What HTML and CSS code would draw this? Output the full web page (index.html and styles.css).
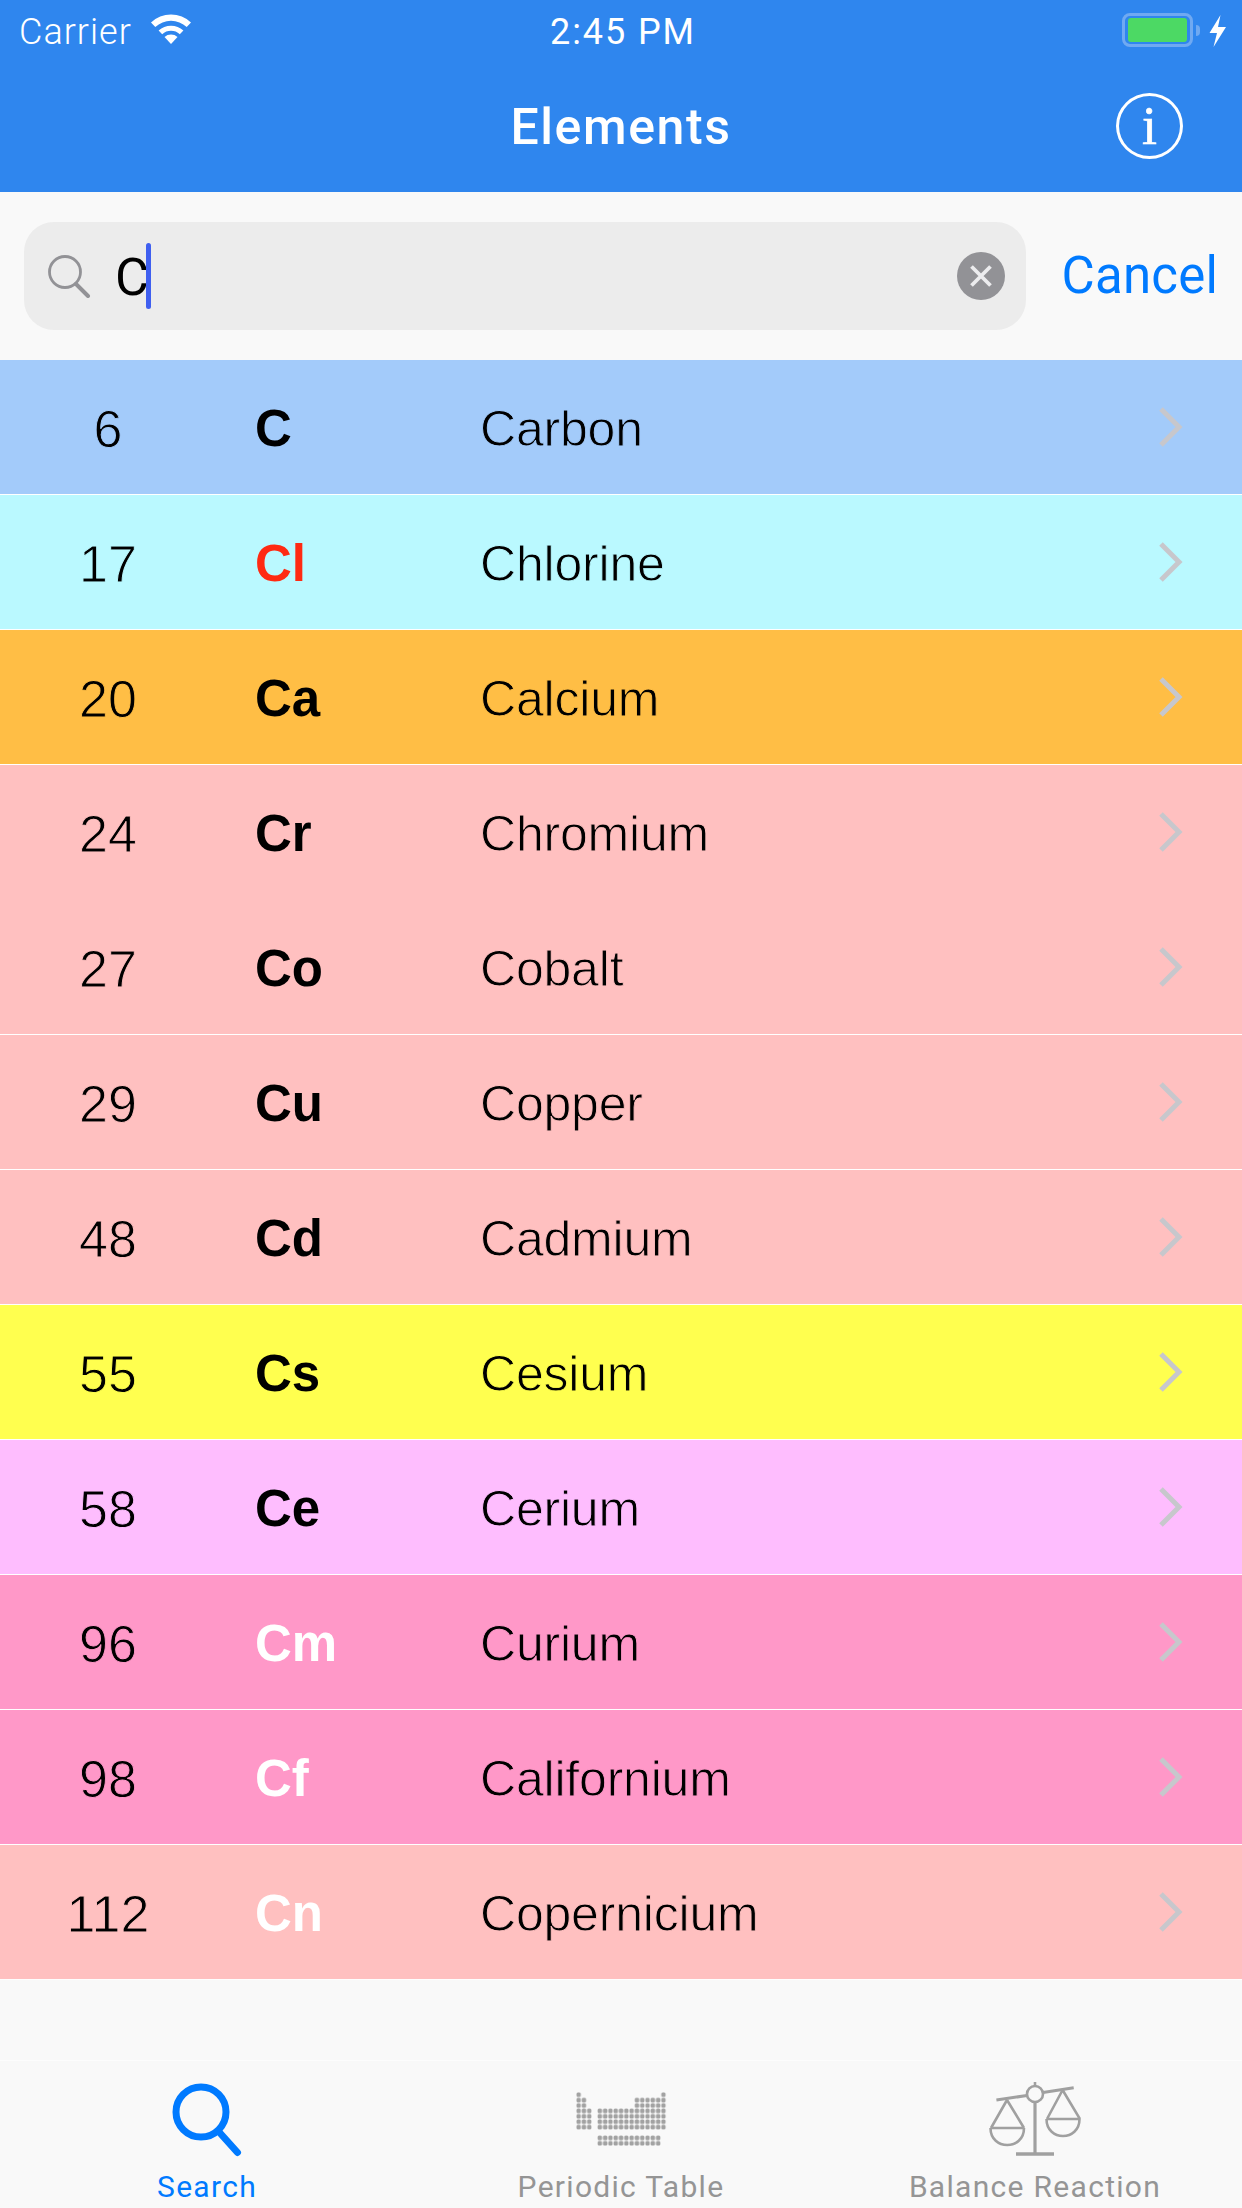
FILE: index.html
```html
<!DOCTYPE html>
<html lang="en">
<head>
<meta charset="utf-8">
<title>Elements</title>
<link rel="stylesheet" href="styles.css">
</head>
<body>
<div class="app">
  <header class="header">
    <div class="status">
      <div class="status-left">
        <span>Carrier</span>
        <svg class="wifi" viewBox="0 0 42 31" width="42" height="31" fill="#fff"><path d="M21 31 L14.500 24 A10 10 0 0 1 27.500 24 Z"/><path d="M8.600 17.500 A18.500 18.500 0 0 1 33.400 17.500 L29.800 21.300 A13 13 0 0 0 12.200 21.300 Z"/><path d="M1 9.500 A29 29 0 0 1 41 9.500 L36.700 14 A23 23 0 0 0 5.300 14 Z"/></svg>
      </div>
      <div class="status-time">2:45 PM</div>
      <div class="status-right">
        <div class="battery"><div class="battery-fill"></div></div>
        <div class="battery-cap"></div>
        <svg class="bolt" viewBox="0 0 18 32" width="18" height="32"><path d="M11.500 0 L0.500 18 L8 18 L4.500 32 L17 12 L9 12 Z" fill="#fff"/></svg>
      </div>
    </div>
    <div class="nav">
      <div class="nav-title">Elements</div>
      <div class="info"><span class="info-i">i</span></div>
    </div>
  </header>

  <div class="searchbar">
    <div class="field">
      <svg class="field-glass" viewBox="0 0 43 43" width="43" height="43"><circle cx="17" cy="17" r="15.500" fill="none" stroke="#929296" stroke-width="2.800"/><path d="M28 29 L40 41" fill="none" stroke="#929296" stroke-width="4" stroke-linecap="round"/></svg>
      <span class="field-text">C</span><span class="caret"></span>
      <div class="clear"><svg viewBox="0 0 22 22" width="22" height="22"><path d="M1.500 1.500 L20.500 20.500 M20.500 1.500 L1.500 20.500" stroke="#ececee" stroke-width="3.800" fill="none"/></svg></div>
    </div>
    <div class="cancel">Cancel</div>
  </div>

  <main class="list">
    <div class="row c-blue"><span class="num">6</span><span class="sym">C</span><span class="name">Carbon</span><svg class="chev" viewBox="0 0 26 42" width="26" height="42"><path d="M3 3 L21 21 L3 39" fill="none" stroke="#c7c7cc" stroke-width="5"/></svg></div>
    <div class="row c-cyan"><span class="num">17</span><span class="sym red">Cl</span><span class="name">Chlorine</span><svg class="chev" viewBox="0 0 26 42" width="26" height="42"><path d="M3 3 L21 21 L3 39" fill="none" stroke="#c7c7cc" stroke-width="5"/></svg></div>
    <div class="row c-orange"><span class="num">20</span><span class="sym">Ca</span><span class="name">Calcium</span><svg class="chev" viewBox="0 0 26 42" width="26" height="42"><path d="M3 3 L21 21 L3 39" fill="none" stroke="#c7c7cc" stroke-width="5"/></svg></div>
    <div class="row c-pink no-line"><span class="num">24</span><span class="sym">Cr</span><span class="name">Chromium</span><svg class="chev" viewBox="0 0 26 42" width="26" height="42"><path d="M3 3 L21 21 L3 39" fill="none" stroke="#c7c7cc" stroke-width="5"/></svg></div>
    <div class="row c-pink"><span class="num">27</span><span class="sym">Co</span><span class="name">Cobalt</span><svg class="chev" viewBox="0 0 26 42" width="26" height="42"><path d="M3 3 L21 21 L3 39" fill="none" stroke="#c7c7cc" stroke-width="5"/></svg></div>
    <div class="row c-pink"><span class="num">29</span><span class="sym">Cu</span><span class="name">Copper</span><svg class="chev" viewBox="0 0 26 42" width="26" height="42"><path d="M3 3 L21 21 L3 39" fill="none" stroke="#c7c7cc" stroke-width="5"/></svg></div>
    <div class="row c-pink"><span class="num">48</span><span class="sym">Cd</span><span class="name">Cadmium</span><svg class="chev" viewBox="0 0 26 42" width="26" height="42"><path d="M3 3 L21 21 L3 39" fill="none" stroke="#c7c7cc" stroke-width="5"/></svg></div>
    <div class="row c-yellow"><span class="num">55</span><span class="sym">Cs</span><span class="name">Cesium</span><svg class="chev" viewBox="0 0 26 42" width="26" height="42"><path d="M3 3 L21 21 L3 39" fill="none" stroke="#c7c7cc" stroke-width="5"/></svg></div>
    <div class="row c-lilac"><span class="num">58</span><span class="sym">Ce</span><span class="name">Cerium</span><svg class="chev" viewBox="0 0 26 42" width="26" height="42"><path d="M3 3 L21 21 L3 39" fill="none" stroke="#c7c7cc" stroke-width="5"/></svg></div>
    <div class="row c-magenta"><span class="num">96</span><span class="sym white">Cm</span><span class="name">Curium</span><svg class="chev" viewBox="0 0 26 42" width="26" height="42"><path d="M3 3 L21 21 L3 39" fill="none" stroke="#c7c7cc" stroke-width="5"/></svg></div>
    <div class="row c-magenta"><span class="num">98</span><span class="sym white">Cf</span><span class="name">Californium</span><svg class="chev" viewBox="0 0 26 42" width="26" height="42"><path d="M3 3 L21 21 L3 39" fill="none" stroke="#c7c7cc" stroke-width="5"/></svg></div>
    <div class="row c-pink"><span class="num">112</span><span class="sym white">Cn</span><span class="name">Copernicium</span><svg class="chev" viewBox="0 0 26 42" width="26" height="42"><path d="M3 3 L21 21 L3 39" fill="none" stroke="#c7c7cc" stroke-width="5"/></svg></div>
  </main>

  <nav class="tabs">
    <div class="tab tab-active">
      <svg viewBox="0 0 92 74" width="92" height="74"><circle cx="40" cy="29" r="25" fill="none" stroke="#007aff" stroke-width="7"/><path d="M59 50 L76.500 69.500" fill="none" stroke="#007aff" stroke-width="7" stroke-linecap="round"/></svg>
      <span>Search</span>
    </div>
    <div class="tab">
      <svg viewBox="0 0 92 74" width="92" height="74">
        <defs><pattern id="dots" width="5.300" height="5.400" patternUnits="userSpaceOnUse"><rect x="0.500" y="0.500" width="4.300" height="4.400" rx="1.400" fill="#a2a2a2"/></pattern></defs>
        <g transform="translate(1 9)" fill="url(#dots)">
          <rect x="0" y="0" width="5.300" height="37.800"/>
          <rect x="5.300" y="5.400" width="5.300" height="32.400"/>
          <rect x="10.600" y="16.200" width="5.300" height="21.600"/>
          <rect x="21.200" y="16.200" width="37.100" height="21.600"/>
          <rect x="58.300" y="5.400" width="31.800" height="32.400"/>
          <rect x="84.800" y="0" width="5.300" height="5.400"/>
          <rect x="21.200" y="43.200" width="63.600" height="10.800"/>
        </g>
      </svg>
      <span>Periodic Table</span>
    </div>
    <div class="tab">
      <svg viewBox="0 0 92 76" width="92" height="76" fill="none" stroke="#a0a0a0" stroke-width="2.600">
        <path d="M46 21.500 V73" stroke-width="3.200"/>
        <path d="M27 73 H65" stroke-width="3.400"/>
        <circle cx="46" cy="13" r="8"/>
        <path d="M46 1 V5"/>
        <path d="M7.400 19 L38 14.500 M54 11.500 L84.700 6.700" stroke-width="3"/>
        <path d="M18 19 L2 47 M18 19 L35 47 M1.500 47 H35 M1.500 47 C1.500 69.700 35 69.700 35 47"/>
        <path d="M73.600 9 L58 38 M73.600 9 L91 38 M57.500 38 H90.500 M57.500 38 C57.500 60.700 90.500 60.700 90.500 38"/>
      </svg>
      <span>Balance Reaction</span>
    </div>
  </nav>
</div>
</body>
</html>
```

FILE: styles.css
```css
* { box-sizing: border-box; }
html, body { margin: 0; padding: 0; }
body { width: 1242px; height: 2208px; background: #f9f9f9; font-family: "Liberation Sans", Arial, sans-serif; overflow: hidden; }
.app { width: 1242px; height: 2208px; display: flex; flex-direction: column; }

.header { height: 192px; background: #2f86ee; color: #fff; display: flex; flex-direction: column; font-family: Roboto, sans-serif; }
.status { height: 63px; display: grid; grid-template-columns: 1fr auto 1fr; align-items: center; padding: 0 15px 0 19px; font-size: 36px; }
.status-left { display: flex; align-items: center; gap: 18px; font-weight: 300; letter-spacing: 1px; }
.status-time { font-weight: 400; letter-spacing: 1.900px; }
.status-right { display: flex; align-items: center; justify-content: flex-end; }
.wifi { margin-top: -7px; }
.battery { width: 71px; height: 34px; border: 3px solid #6fa9f2; border-radius: 8px; padding: 2px 3px; margin-top: -3px; }
.battery-fill { width: 100%; height: 100%; background: #4cd964; border-radius: 3px; }
.battery-cap { width: 4px; height: 11px; background: #6fa9f2; border-radius: 0 4px 4px 0; margin: -3px 9px 0 3px; }
.bolt { margin-top: -2px; }
.nav { flex: 1; position: relative; display: flex; align-items: center; justify-content: center; }
.nav-title { font-size: 50px; font-weight: 500; letter-spacing: 1.600px; margin-top: -1px; }
.info { position: absolute; right: 59px; top: 30px; width: 67px; height: 66px; border: 3px solid #fff; border-radius: 50%; display: flex; align-items: center; justify-content: center; }
.info-i { font-family: "Liberation Serif", serif; font-size: 54px; line-height: 1; -webkit-text-stroke: 0.6px #fff; }

.searchbar { height: 168px; display: flex; align-items: center; padding: 0 24px; }
.field { width: 1002px; height: 108px; background: #ececec; border-radius: 30px; display: flex; align-items: center; padding-left: 24px; position: relative; }
.field-text { font-family: Roboto, sans-serif; font-size: 52px; color: #000; margin-left: 24px; margin-top: 2px; font-weight: 400; }
.caret { width: 5px; height: 66px; background: #3f5ff0; border-radius: 3px; margin-left: -3px; }
.clear { position: absolute; right: 21px; top: 30px; width: 48px; height: 48px; background: #929296; border-radius: 50%; display: flex; align-items: center; justify-content: center; }
.cancel { flex: 1; text-align: right; font-family: Roboto, sans-serif; font-size: 51px; color: #007aff; font-weight: 400; margin-top: -2px; letter-spacing: 0.200px; }

.list { display: flex; flex-direction: column; }
.row { height: 135px; display: grid; grid-template-columns: 216px 264px 1fr auto; align-items: center; border-bottom: 1px solid #fff; padding-right: 58px; color: #000; background: var(--row); }
.row.no-line { border-bottom-color: transparent; }
.num, .name { -webkit-text-stroke: 0.9px var(--row); padding-top: 3px; }
.num { text-align: center; font-size: 52px; }
.name { font-size: 50px; letter-spacing: -0.200px; }
.sym { padding-left: 39px; font-size: 51px; font-weight: 700; padding-top: 3px; }
.red { color: #ff2a12; }
.white { color: #fff; }
.c-blue { --row: #a3cbfa; }
.c-cyan { --row: #baf9ff; }
.c-orange { --row: #ffbe45; }
.c-pink { --row: #ffc0c0; }
.c-yellow { --row: #ffff4f; }
.c-lilac { --row: #febdfe; }
.c-magenta { --row: #ff98c8; }

.tabs { margin-top: auto; height: 148px; display: grid; grid-template-columns: 414px 414px 414px; background: #f9f9f9; border-top: 1px solid #fdfdfd; }
.tab { display: flex; flex-direction: column; align-items: center; justify-content: flex-end; font-family: Roboto, sans-serif; font-size: 30px; letter-spacing: 1.300px; color: #959595; padding-bottom: 4px; gap: 12px; }
.tab-active { color: #007aff; }
```
